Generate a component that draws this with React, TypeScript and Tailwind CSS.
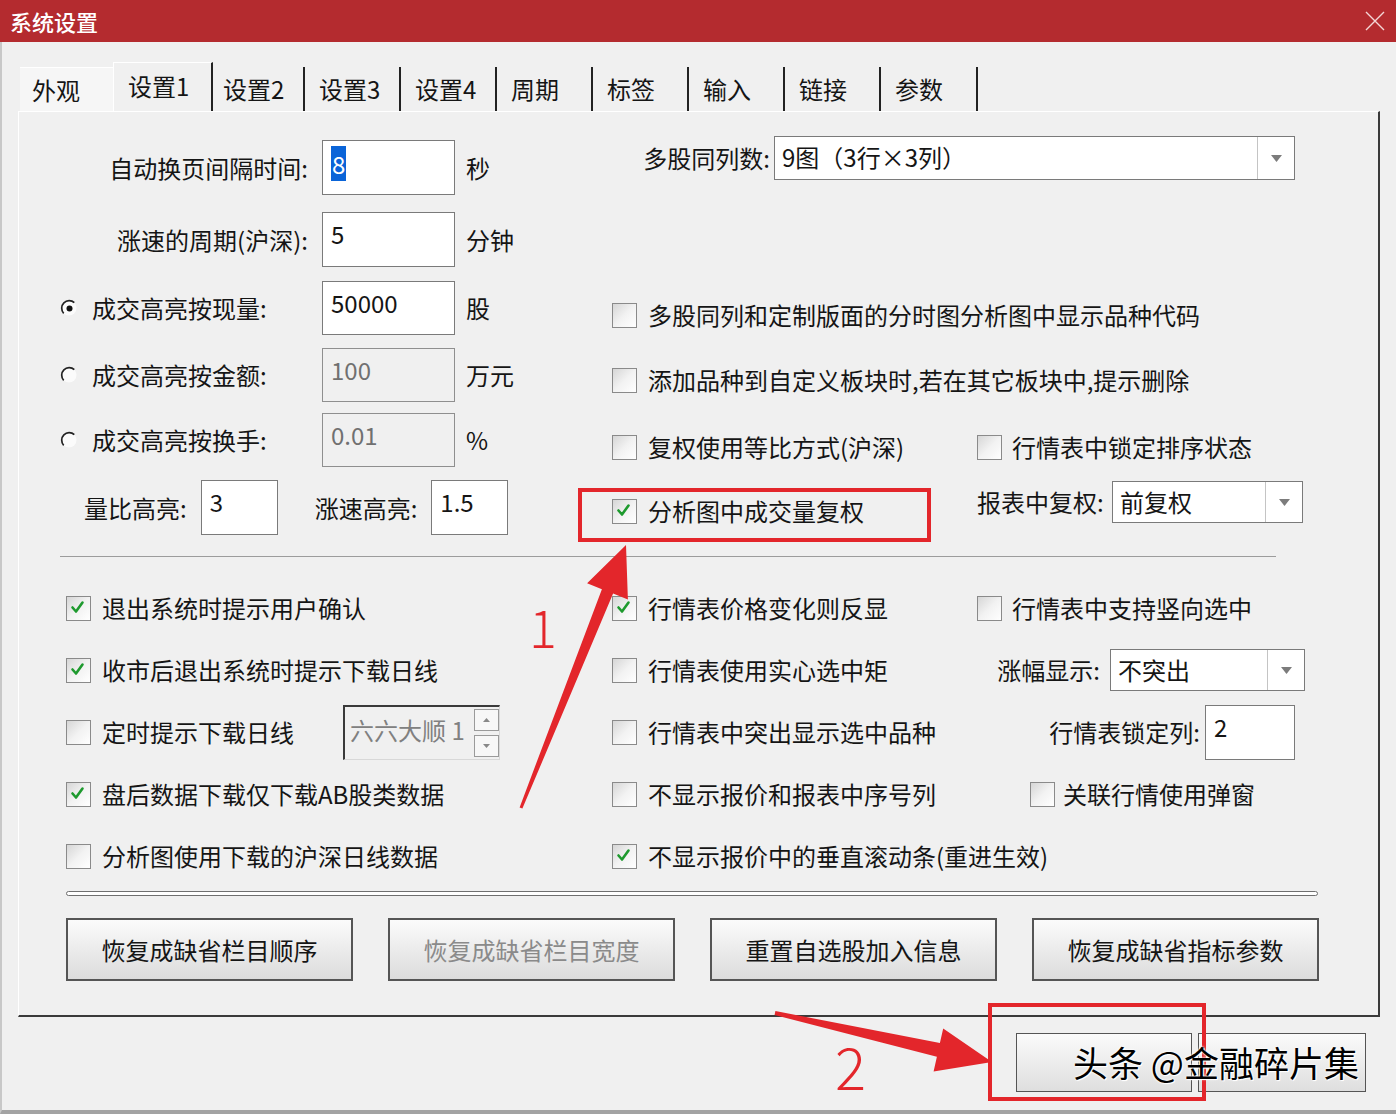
import React from 'react';

// 系统设置 dialog — 设置1 tab, with red annotations

function CheckBox({ on }: { on?: boolean }) {
  return (
    <span className="flex h-[25px] w-[25px] shrink-0 items-start justify-start border border-[#8a8a8a] bg-linear-to-br from-[#d6d6d6] via-[#f2f2f2] to-white pl-[3px] pt-[3px]">
      {on && (
        <svg width="15" height="15" viewBox="0 0 15 15">
          <path d="M2.5 7.5 L6 11.5 L12.5 2.5" fill="none" stroke="#1e9a2e" strokeWidth="2.6" strokeLinecap="round" strokeLinejoin="round" />
        </svg>
      )}
    </span>
  );
}

function Radio({ on }: { on?: boolean }) {
  return (
    <svg width="18" height="18" viewBox="0 0 18 18" className="shrink-0">
      <circle cx="9" cy="9" r="7.5" fill="#fbfbfb" />
      <path d="M14.3 3.7 A7.5 7.5 0 0 0 3.7 14.3" fill="none" stroke="#222" strokeWidth="1.7" />
      {on && <circle cx="9.5" cy="9.5" r="3" fill="#111" />}
    </svg>
  );
}

function Caret() {
  return (
    <span className="flex w-[37px] shrink-0 items-center justify-center border-l border-l-[#c4c4c4]">
      <svg width="11" height="7" viewBox="0 0 11 7">
        <path d="M0 0 H11 L5.5 7 Z" fill="#7c7c7c" />
      </svg>
    </span>
  );
}

function Check({ on, children }: { on?: boolean; children: React.ReactNode }) {
  return (
    <span className="flex items-center whitespace-nowrap">
      <CheckBox on={on} />
      <span className="ml-[11px]">{children}</span>
    </span>
  );
}

export default function App() {
  return (
    <div className="relative h-[1114px] w-[1396px] overflow-hidden whitespace-nowrap bg-[#f0f0f0] font-['Noto_Sans_CJK_SC',sans-serif] text-[24px] leading-[30px] text-[#151515]">
      {/* Title bar */}
      <div className="flex h-[42px] items-center justify-between bg-[#b42b2f] pl-[10px] pr-[11px]">
        <span className="text-[22px] font-medium leading-none text-white">系统设置</span>
        <svg width="20" height="20" viewBox="0 0 20 20">
          <path d="M1 1 L19 19 M19 1 L1 19" stroke="#f4d6d6" strokeWidth="1.4" />
        </svg>
      </div>

      <div className="h-[1072px] border-b-4 border-l-2 border-b-[#a3a3a3] border-l-[#c8c8c8]">
        {/* Tabs */}
        <div className="flex h-[69px] items-end pl-[18px]">
          <div className="flex h-[44px] w-[93px] items-center border-t border-t-white bg-[#f6f6f6] pl-[12px]">外观</div>
          <div className="flex h-[49px] w-[100px] items-center border-l border-r-2 border-t border-l-white border-r-[#222] border-t-white pb-[3px] pl-[14px]">设置1</div>
          <div className="flex h-[44px] w-[92px] items-center border-r-2 border-r-[#222] pl-[10px]">设置2</div>
          <div className="flex h-[44px] w-[96px] items-center border-r-2 border-r-[#222] pl-[14px]">设置3</div>
          <div className="flex h-[44px] w-[96px] items-center border-r-2 border-r-[#222] pl-[14px]">设置4</div>
          <div className="flex h-[44px] w-[96px] items-center border-r-2 border-r-[#222] pl-[14px]">周期</div>
          <div className="flex h-[44px] w-[96px] items-center border-r-2 border-r-[#222] pl-[14px]">标签</div>
          <div className="flex h-[44px] w-[96px] items-center border-r-2 border-r-[#222] pl-[14px]">输入</div>
          <div className="flex h-[44px] w-[96px] items-center border-r-2 border-r-[#222] pl-[14px]">链接</div>
          <div className="flex h-[44px] w-[97px] items-center border-r-2 border-r-[#222] pl-[14px]">参数</div>
        </div>

        {/* Tab panel */}
        <div className="ml-[16px] h-[906px] w-[1362px] border-b-2 border-l border-r-2 border-t border-b-[#3a3a3a] border-l-white border-r-[#3a3a3a] border-t-white">
          <div className="flex h-[444px]">
            {/* left column */}
            <div className="w-[541px] pt-[28px]">
              <div className="flex h-[55px] items-center">
                <span className="w-[289px] text-right">自动换页间隔时间:</span>
                <div className="ml-[14px] h-full w-[133px] border border-[#7a7a7a] bg-white pl-[8px] pt-[8px]">
                  <span className="bg-[#0a64d8] px-px text-white">8</span>
                </div>
                <span className="ml-[11px]">秒</span>
              </div>
              <div className="mt-[17px] flex h-[55px] items-center">
                <span className="w-[289px] text-right">涨速的周期(沪深):</span>
                <div className="ml-[14px] h-full w-[133px] border border-[#7a7a7a] bg-white pl-[8px] pt-[6px]">5</div>
                <span className="ml-[11px]">分钟</span>
              </div>
              <div className="mt-[14px] flex h-[54px] items-center">
                <span className="flex w-[289px] items-center pl-[41px]">
                  <Radio on />
                  <span className="ml-[14px]">成交高亮按现量:</span>
                </span>
                <div className="ml-[14px] h-full w-[133px] border border-[#7a7a7a] bg-white pl-[8px] pt-[6px]">50000</div>
                <span className="ml-[11px]">股</span>
              </div>
              <div className="mt-[13px] flex h-[54px] items-center">
                <span className="flex w-[289px] items-center pl-[41px]">
                  <Radio />
                  <span className="ml-[14px]">成交高亮按金额:</span>
                </span>
                <div className="ml-[14px] h-full w-[133px] border border-[#8f8f8f] pl-[8px] pt-[6px] text-[#707070]">100</div>
                <span className="ml-[11px]">万元</span>
              </div>
              <div className="mt-[11px] flex h-[54px] items-center">
                <span className="flex w-[289px] items-center pl-[41px]">
                  <Radio />
                  <span className="ml-[14px]">成交高亮按换手:</span>
                </span>
                <div className="ml-[14px] h-full w-[133px] border border-[#8f8f8f] pl-[8px] pt-[6px] text-[#707070]">0.01</div>
                <span className="ml-[11px]">%</span>
              </div>
              <div className="mt-[13px] flex h-[55px] items-center pl-[65px]">
                <span>量比高亮:</span>
                <div className="ml-[14px] h-full w-[77px] border border-[#7a7a7a] bg-white pl-[8px] pt-[6px]">3</div>
                <span className="ml-[37px]">涨速高亮:</span>
                <div className="ml-[14px] h-full w-[77px] border border-[#7a7a7a] bg-white pl-[8px] pt-[6px]">1.5</div>
              </div>
            </div>

            {/* right column */}
            <div className="flex-1 pt-[24px]">
              <div className="flex h-[44px] items-center">
                <span className="w-[210px] text-right">多股同列数:</span>
                <div className="ml-[4px] flex h-full w-[521px] border border-[#7a7a7a] bg-white">
                  <span className="flex-1 pl-[7px] pt-[5px]">9图（3行×3列）</span>
                  <Caret />
                </div>
              </div>
              <div className="mt-[115px] flex h-[40px] items-center pl-[52px]">
                <Check>多股同列和定制版面的分时图分析图中显示品种代码</Check>
              </div>
              <div className="mt-[25px] flex h-[40px] items-center pl-[52px]">
                <Check>添加品种到自定义板块时,若在其它板块中,提示删除</Check>
              </div>
              <div className="mt-[27px] flex h-[40px] items-center">
                <span className="flex w-[417px] items-center pl-[52px]">
                  <Check>复权使用等比方式(沪深)</Check>
                </span>
                <span className="flex items-center">
                  <CheckBox />
                  <span className="ml-[10px]">行情表中锁定排序状态</span>
                </span>
              </div>
              <div className="mt-[14px] flex h-[42px]">
                <span className="flex w-[417px] items-center pl-[52px] pt-[18px]">
                  <Check on>分析图中成交量复权</Check>
                </span>
                <span className="flex items-center">
                  <span className="w-[124px] shrink-0 text-right">报表中复权:</span>
                  <div className="ml-[11px] flex h-[42px] w-[191px] border border-[#7a7a7a] bg-white">
                    <span className="flex-1 pl-[7px] pt-[5px]">前复权</span>
                    <Caret />
                  </div>
                </span>
              </div>
            </div>
          </div>

          {/* separator */}
          <div className="ml-[41px] h-px w-[1216px] bg-[#9c9c9c]" />

          {/* lower checkboxes */}
          <div className="mt-[20px]">
            <div className="flex h-[62px] items-center">
              <span className="flex w-[593px] items-center pl-[47px]">
                <Check on>退出系统时提示用户确认</Check>
              </span>
              <span className="flex w-[365px] items-center">
                <Check on>行情表价格变化则反显</Check>
              </span>
              <span className="flex items-center">
                <CheckBox />
                <span className="ml-[10px]">行情表中支持竖向选中</span>
              </span>
            </div>
            <div className="flex h-[62px] items-center">
              <span className="flex w-[593px] items-center pl-[47px]">
                <Check on>收市后退出系统时提示下载日线</Check>
              </span>
              <span className="flex w-[365px] items-center">
                <Check>行情表使用实心选中矩</Check>
              </span>
              <span className="flex items-center">
                <span className="w-[123px] shrink-0 text-right">涨幅显示:</span>
                <div className="ml-[10px] flex h-[42px] w-[195px] border border-[#7a7a7a] bg-white">
                  <span className="flex-1 pl-[7px] pt-[5px]">不突出</span>
                  <Caret />
                </div>
              </span>
            </div>
            <div className="flex h-[62px] items-center">
              <span className="flex w-[593px] items-center pl-[47px]">
                <CheckBox />
                <span className="ml-[11px] w-[241px]">定时提示下载日线</span>
                <div className="flex h-[55px] w-[157px] border-b border-l-2 border-r border-t-2 border-b-[#d8d8d8] border-l-[#3a3a3a] border-r-[#d8d8d8] border-t-[#3a3a3a]">
                  <span className="flex-1 pl-[5px] pt-[8px] text-[#808080]">六六大顺 1</span>
                  <span className="flex w-[25px] flex-col justify-center gap-[4px] py-[2px]">
                    <span className="flex h-[22px] items-center justify-center border border-[#9a9a9a] bg-[#f7f7f7]">
                      <svg width="7" height="4" viewBox="0 0 7 4"><path d="M0 4 L3.5 0 L7 4 Z" fill="#888" /></svg>
                    </span>
                    <span className="flex h-[22px] items-center justify-center border border-[#9a9a9a] bg-[#f7f7f7]">
                      <svg width="7" height="4" viewBox="0 0 7 4"><path d="M0 0 L3.5 4 L7 0 Z" fill="#888" /></svg>
                    </span>
                  </span>
                </div>
              </span>
              <span className="flex w-[365px] items-center">
                <Check>行情表中突出显示选中品种</Check>
              </span>
              <span className="flex items-center">
                <span className="w-[223px] shrink-0 text-right">行情表锁定列:</span>
                <div className="ml-[5px] h-[55px] w-[90px] border border-[#7a7a7a] bg-white pl-[8px] pt-[6px]">2</div>
              </span>
            </div>
            <div className="flex h-[62px] items-center">
              <span className="flex w-[593px] items-center pl-[47px]">
                <Check on>盘后数据下载仅下载AB股类数据</Check>
              </span>
              <span className="flex w-[365px] items-center">
                <Check>不显示报价和报表中序号列</Check>
              </span>
              <span className="flex items-center pl-[53px]">
                <CheckBox />
                <span className="ml-[8px]">关联行情使用弹窗</span>
              </span>
            </div>
            <div className="flex h-[62px] items-center">
              <span className="flex w-[593px] items-center pl-[47px]">
                <Check>分析图使用下载的沪深日线数据</Check>
              </span>
              <span className="flex flex-1 items-center">
                <Check on>不显示报价中的垂直滚动条(重进生效)</Check>
              </span>
            </div>
          </div>

          {/* groove separator */}
          <div className="ml-[47px] mt-[4px] h-[5px] w-[1252px] rounded-full border border-[#6f6f6f] bg-white" />

          {/* buttons */}
          <div className="mt-[22px] flex gap-[35px] pl-[47px]">
            <button className="h-[63px] w-[287px] border-2 border-[#555] bg-linear-to-b from-[#fbfbfb] to-[#dcdcdc] text-[24px] text-[#151515]">恢复成缺省栏目顺序</button>
            <button className="h-[63px] w-[287px] border-2 border-[#555] bg-linear-to-b from-[#fbfbfb] to-[#dcdcdc] text-[24px] text-[#8a8a8a]">恢复成缺省栏目宽度</button>
            <button className="h-[63px] w-[287px] border-2 border-[#555] bg-linear-to-b from-[#fbfbfb] to-[#dcdcdc] text-[24px] text-[#151515]">重置自选股加入信息</button>
            <button className="h-[63px] w-[287px] border-2 border-[#555] bg-linear-to-b from-[#fbfbfb] to-[#dcdcdc] text-[24px] text-[#151515]">恢复成缺省指标参数</button>
          </div>
        </div>

        {/* dialog buttons */}
        <div className="mt-[16px] flex justify-end gap-[6px] pr-[30px]">
          <button className="h-[59px] w-[176px] border border-[#555] bg-linear-to-b from-[#fbfbfb] to-[#dedede]" />
          <button className="h-[59px] w-[168px] border border-[#555] bg-linear-to-b from-[#fbfbfb] to-[#dedede]" />
        </div>
      </div>

      {/* annotations */}
      <div className="absolute left-[578px] top-[488px] h-[54px] w-[353px] border-4 border-[#e3262b]" />
      <div className="absolute left-[988px] top-[1003px] h-[98px] w-[218px] border-4 border-[#e3262b]" />
      <svg className="pointer-events-none absolute left-0 top-0" width="1396" height="1114" viewBox="0 0 1396 1114">
        <polygon
          points="519.6,807.4 601.9,589.2 587.1,583.2 626,545 627.9,599.6 613.1,593.6 522.4,808.6"
          fill="#e3262b"
        />
        <polygon
          points="775.4,1011 939.9,1043.1 943.2,1028.5 992,1062 933.6,1071.4 936.9,1056.7 774.6,1015"
          fill="#e3262b"
        />
      </svg>
      <span className="absolute left-[529px] top-[600px] text-[52px] font-light leading-none text-[#e3262b]">1</span>
      <span className="absolute left-[835px] top-[1036px] text-[58px] font-light leading-none text-[#e3262b]">2</span>
      <span className="absolute left-[1073px] top-[1044px] text-[35px] leading-none text-black [text-shadow:0_0_2px_#fff,0_0_3px_#fff,1px_1px_0_#fff]">
        头条 @金融碎片集
      </span>
    </div>
  );
}
